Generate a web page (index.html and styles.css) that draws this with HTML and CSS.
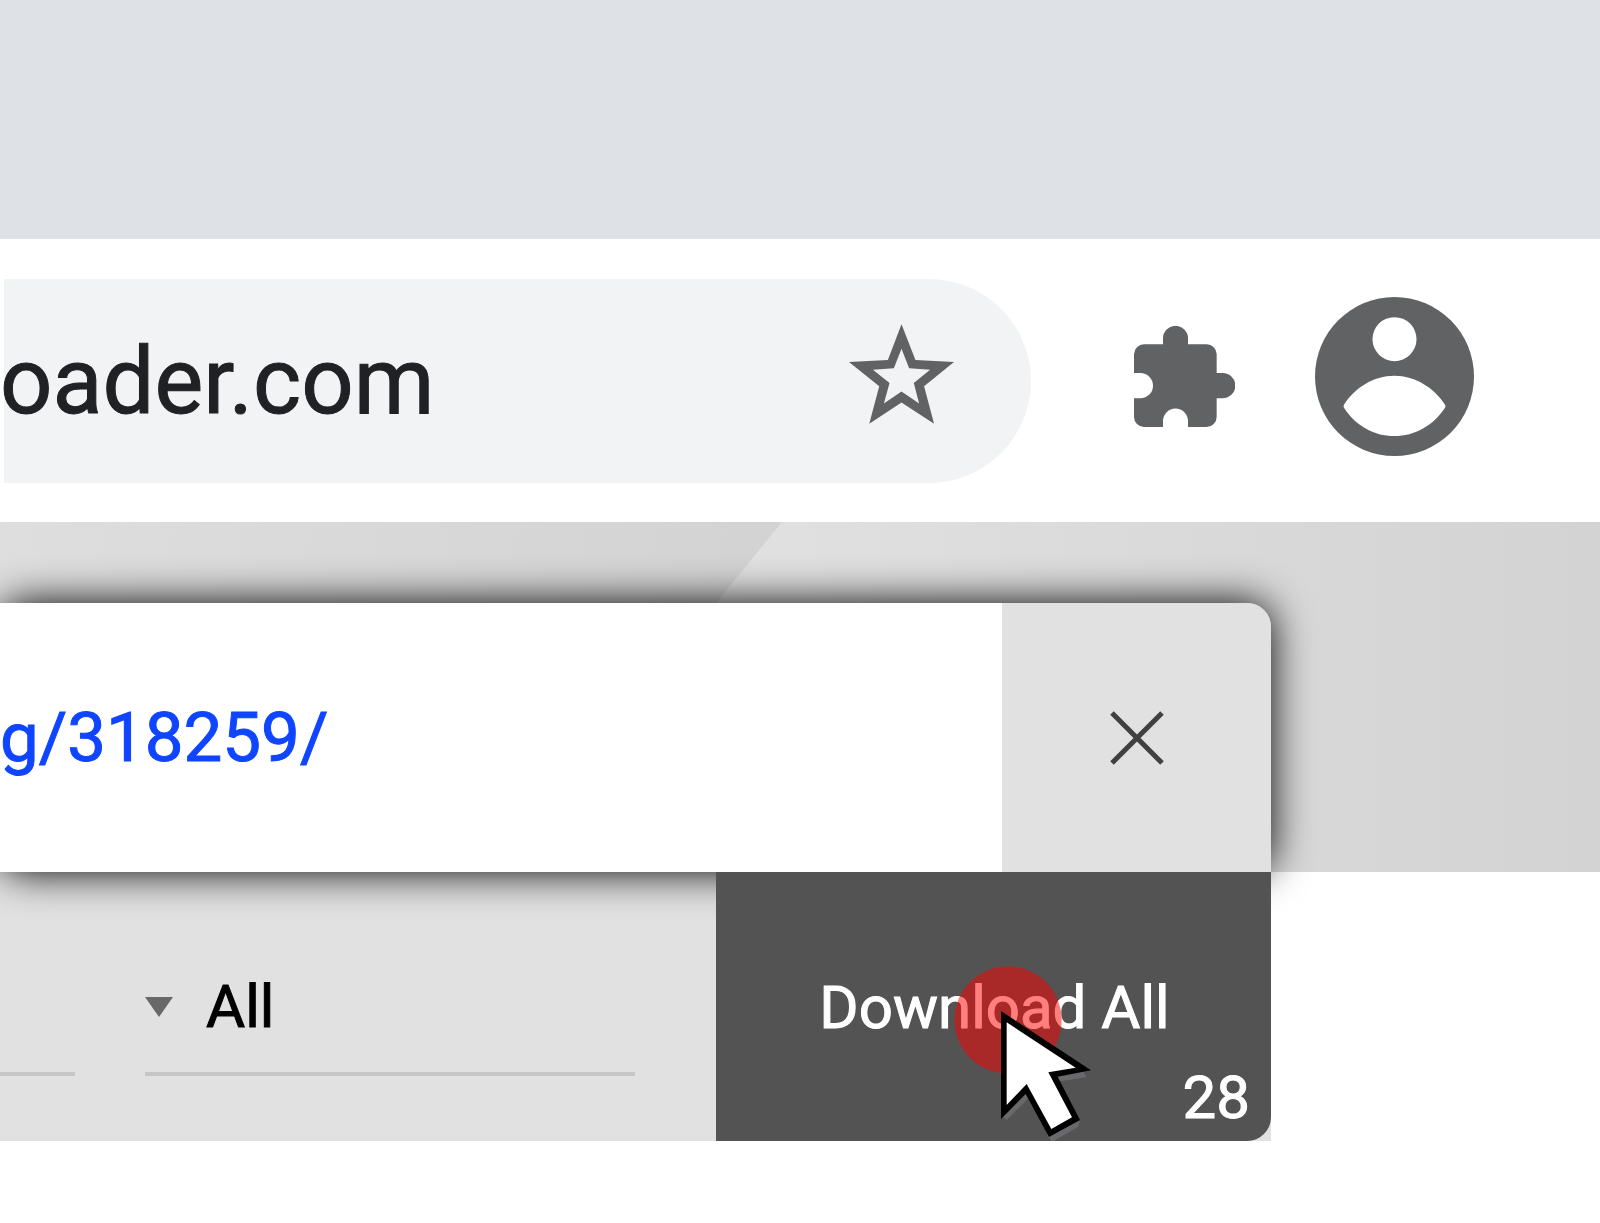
FILE: index.html
```html
<!DOCTYPE html>
<html lang="en">
<head>
    <meta charset="UTF-8">
    <meta name="viewport" content="width=device-width, initial-scale=1.0">
    <title>Downloader</title>
    <link rel="stylesheet" href="styles.css">
</head>
<body>
    <div class="tab-strip"></div>

    <header class="toolbar">
        <div class="omnibox">
            <input class="address" type="text" value="oader.com" aria-label="Address">
            <button class="icon-button" aria-label="Bookmark this page">
                <svg width="105" height="104" viewBox="85 162 316 312">
                    <path fill="#616264" fill-rule="evenodd" d="M243 162L285 270L401 276L311 349L341 462L243 398L146 462L176 349L85 276L202 270ZM243 236L220 295L157 299L207 339L190 401L243 365L296 401L280 339L329 299L266 295Z"/>
                </svg>
            </button>
        </div>
        <button class="icon-button" aria-label="Extensions">
            <svg width="101" height="101" viewBox="72 135 303 303">
                <path fill="#616264" d="M102 190H159V172A37 37 0 0 1 234 172V190H290A30 30 0 0 1 320 220V276H338A38 38 0 0 1 338 352H320V408A30 30 0 0 1 290 438H234V420A37 37 0 0 0 159 420V438H102A30 30 0 0 1 72 408V352H91A38 38 0 0 0 91 276H72V220A30 30 0 0 1 102 190Z"/>
            </svg>
        </button>
        <button class="icon-button" aria-label="Profile">
            <svg width="159" height="159" viewBox="615 53 477 477">
                <circle cx="853.5" cy="291.5" r="238.5" fill="#616264"/>
                <circle cx="853.5" cy="179.5" r="66" fill="#fff"/>
                <path fill="#fff" d="M702 376C735 325 790 289 853 289S972 325 1005 376Q1008 380 1005 385C970 438 915 470 853 470S736 438 702 385Q699 380 702 376Z"/>
            </svg>
        </button>
    </header>

    <main>
        <section class="hero">
            <div class="search">
                <input class="url" type="text" value="g/318259/" aria-label="Page URL">
                <button class="clear" aria-label="Clear">
                    <svg width="54" height="54" viewBox="0 0 54 54">
                        <path stroke="#3e4042" stroke-width="5" d="M2 2L52 52M52 2L2 52"/>
                    </svg>
                </button>
            </div>
        </section>

        <section class="options">
            <div class="filters">
                <div class="filter filter-cut"></div>
                <label class="filter filter-type">
                    <select aria-label="File type">
                        <option>All</option>
                    </select>
                </label>
            </div>
            <div class="download-area">
                <button class="download">Download All <span class="count">28</span></button>
                <svg class="pointer" width="138" height="176" viewBox="762 318 414 528">
                    <circle cx="924" cy="480" r="161" fill="#f00" fill-opacity=".5"/>
                    <path fill="#69696b" d="M1148 630L1159 652L1082 664L1066 648ZM1139 780L1135 800L1057 845L1040 825ZM908 770L920 780L984 716L977 700Z"/>
                    <path d="M903 453L1173 631L1073 650L1140 780L1047 831L977 702L903 777Z"/>
                    <path fill="#fff" d="M920 487L1127 623L1045 637L1116 772L1054 807L980 672L920 735Z"/>
                </svg>
            </div>
        </section>
    </main>
</body>
</html>
```

FILE: styles.css
```css
* {
    box-sizing: border-box;
}
body {
    margin: 0;
    background: #fff;
    font-family: Roboto, Arial, sans-serif;
    -webkit-text-stroke: 1px currentColor;
}
button, input, select {
    margin: 0;
    padding: 0;
    border: none;
    border-radius: 0;
    background: none;
    color: inherit;
    font: inherit;
}
button {
    cursor: pointer;
}
svg {
    display: block;
}
.tab-strip {
    height: 239px;
    background: #dee1e6;
}

/* toolbar */
.toolbar {
    display: flex;
    align-items: center;
    padding: 40px 126px 39px 4px;
    gap: 80px;
}
.omnibox {
    display: flex;
    align-items: center;
    flex: 1;
    min-width: 0;
    height: 204px;
    margin-right: 23px;
    padding-right: 77px;
    border-radius: 0 102px 102px 0;
    background: #f1f3f5;
}
.address {
    flex: 1;
    min-width: 0;
    height: 120px;
    margin-left: -4px;
    color: #202124;
    font-size: 92px;
}
.icon-button {
    padding-bottom: 10px;
}

/* url box */
.hero {
    position: relative;
    padding: 81px 329px 0 0;
    background: linear-gradient(to right, #e1e1e1 45%, #d3d3d3);
}
.hero::before {
    content: "";
    position: absolute;
    inset: 0;
    background: linear-gradient(100deg, #dedede, #d2d2d2 50%);
    clip-path: polygon(0 0, 782px 0, 497px 100%, 0 100%);
}
.search {
    position: relative;
    z-index: 1;
    display: flex;
    height: 269px;
    border-radius: 24px;
    box-shadow: 0 0 40px #000;
}
.url {
    flex: 1;
    min-width: 0;
    background: #fff;
    color: #0f45ff;
    font-size: 69px;
}
.clear {
    display: flex;
    align-items: center;
    justify-content: center;
    width: 269px;
    border-radius: 0 24px 0 0;
    background: #e1e1e1;
}

/* filters and download */
.options {
    display: flex;
    height: 269px;
    margin-right: 329px;
    background: #e1e1e1;
    font-size: 60px;
}
.filters {
    display: flex;
    align-items: center;
    flex: 1;
    gap: 70px;
    padding-right: 81px;
}
.filter {
    display: flex;
    align-items: center;
    height: 138px;
    border-top: 4px solid transparent;
    border-bottom: 4px solid #c6c6c6;
}
.filter-cut {
    width: 75px;
}
.filter-type {
    flex: 1;
    gap: 33px;
}
.filter-type::before {
    content: "";
    border: 14px solid transparent;
    border-top: 20px solid #686868;
    border-bottom: none;
}
.filter-type select {
    flex: 1;
    appearance: none;
    color: #000;
}
.download-area {
    position: relative;
    z-index: 2;
    display: flex;
    width: 555px;
}
.download {
    flex: 1;
    padding: 2px 0 0 2px;
    border-radius: 0 0 24px 0;
    background: #535353;
    color: #fff;
}
.count {
    position: absolute;
    right: 21px;
    bottom: 13px;
    line-height: 60px;
}
.pointer {
    position: absolute;
    top: 94px;
    left: 238px;
    pointer-events: none;
}
```
